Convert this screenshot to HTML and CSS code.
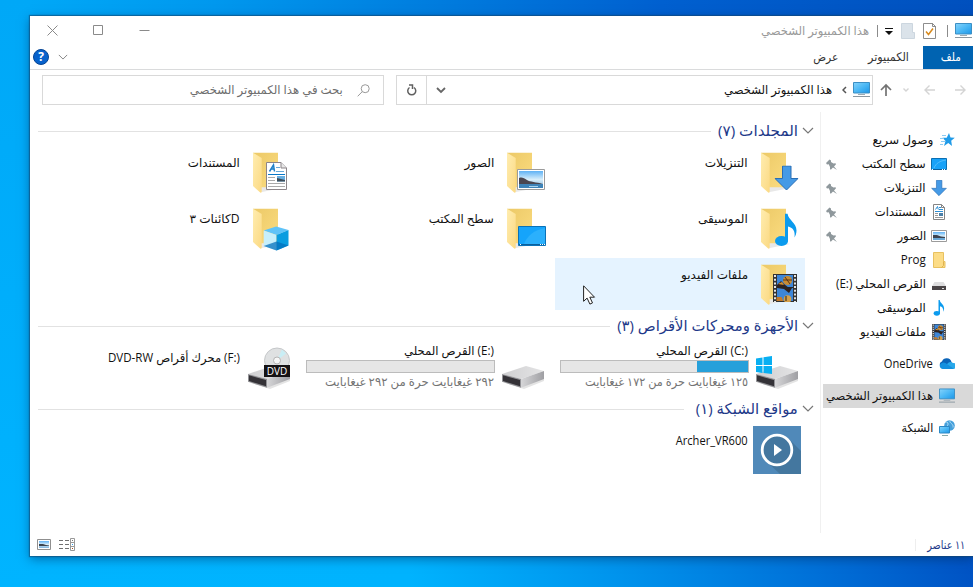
FILE: index.html
```
<!DOCTYPE html>
<html lang="ar" dir="rtl">
<head>
<meta charset="utf-8">
<title>هذا الكمبيوتر الشخصي</title>
<link rel="stylesheet" href="styles.css">
</head>
<body>
<svg class="defs" aria-hidden="true">
  <defs>
    <linearGradient id="gBack" x1="0" y1="0" x2="1" y2="1"><stop offset="0" stop-color="#ecc967"/><stop offset="1" stop-color="#fbdc80"/></linearGradient>
    <linearGradient id="gFlap" x1="0" y1="0" x2="1" y2="1"><stop offset="0" stop-color="#ffedb0"/><stop offset="1" stop-color="#fbd983"/></linearGradient>
    <linearGradient id="gScreen" x1="0" y1="0" x2="1" y2="1"><stop offset="0" stop-color="#86d3fb"/><stop offset=".5" stop-color="#4bb8f5"/><stop offset="1" stop-color="#1c96e8"/></linearGradient>
    <linearGradient id="gTop" x1="0" y1="0" x2="1" y2="0"><stop offset="0" stop-color="#cfcfd1"/><stop offset="1" stop-color="#e4e4e5"/></linearGradient>
    <linearGradient id="gSide" x1="0" y1="0" x2="1" y2="0"><stop offset="0" stop-color="#d6d6d8"/><stop offset="1" stop-color="#9f9fa3"/></linearGradient>
    <linearGradient id="gSky" x1="0" y1="0" x2="0" y2="1"><stop offset="0" stop-color="#5fb2f5"/><stop offset=".5" stop-color="#d8eefa"/><stop offset="1" stop-color="#7fb4dd"/></linearGradient>
  </defs>
  <symbol id="folder" viewBox="0 0 48 48">
    <path d="M10 39h23l4 1-20 4z" fill="#e8e8e8"/>
    <path d="M8 4.7h25v34.5H14z" fill="url(#gBack)"/>
    <path d="M8 4.7l8.7 5.3v34.2l-1.2.6L8 38z" fill="url(#gFlap)"/>
  </symbol>
  <symbol id="photo" viewBox="0 0 28 21">
    <path d="M.5.5h27v20H.5z" fill="#fff" stroke="#9b9b9b"/>
    <path d="M2 2h24v17H2z" fill="url(#gSky)"/>
    <path d="M2 9c3-1 5 0 8 2s9 2 16 4H2z" fill="#4a4650"/>
    <path d="M2 15h24v4H2z" fill="#3e83b8"/><path d="M12 17h9v1h-9z" fill="#a9d3ee"/>
  </symbol>
  <symbol id="photo-small" viewBox="0 0 16 12">
    <path d="M.5.5h15v11H.5z" fill="#fff" stroke="#9b9b9b"/>
    <path d="M2 2h12v8H2z" fill="url(#gSky)"/>
    <path d="M2 5h4l4 1.500 4 .5v1H2z" fill="#3c4450"/><path d="M2 8h12v2H2z" fill="#6aa7d4"/>
  </symbol>
  <symbol id="film" viewBox="0 0 24 28">
    <path d="M0 0h24v28H0z" fill="#333"/>
    <path d="M4 1h16v12H4zM4 14h16v13H4z" fill="#3d86d8"/>
    <path d="M2 1v27M22 1v27" stroke="#e4e4e4" stroke-width="2" stroke-dasharray="2 1.7"/>
    <circle cx="14.5" cy="6.500" r="4.500" fill="#c88c34"/><path d="M10 6h9M12 3l5 7" stroke="#5b3214"/>
    <path d="M4 11l4-4 3 3 5 4h3l-3 5-5-4-7-1z" fill="#30221f"/><path d="M5 10l4-2 2 3z" fill="#d4912f"/>
    <circle cx="14.500" cy="25" r="3.800" fill="#d6a04a"/><path d="M3.500 23h5l2 4h-7z" fill="#c27a2c"/><path d="M4 13.500h16M13 22v5" stroke="#252525"/>
  </symbol>
  <symbol id="doc" viewBox="0 0 21 28">
    <path d="M.5.5H15L20.500 6v21.500H.5z" fill="#fff" stroke="#8c8589"/><path d="M15 .5V6h5.500" fill="#e8e8e8" stroke="#8c8589"/>
    <path d="M3.500 9.500L7.500 3l1 6.500M5 7h3" fill="none" stroke="#1f80c8" stroke-width="1.500"/>
    <path d="M10 5.500h4M10 9.500h8" stroke="#67a9d8"/><path d="M2 12.500h17" stroke="#0878c8"/>
    <path d="M2 15.500h7M2 18.500h7M2 21.500h17M2 24.500h17" stroke="#aaa"/><path d="M11 14h8v5.500h-8z" fill="#67aee0"/><path d="M11 16l8 2v1.500h-8z" fill="#3d4c58"/>
  </symbol>
  <symbol id="desk" viewBox="0 0 28 20">
    <path d="M.5.5h27v19H.5z" fill="#15a4fb" stroke="#0a72b8"/><path d="M6 18C9 10 16 4 27 2v16z" fill="#2bb0fc"/><path d="M1 18.500h26" stroke="#0b5f9c"/><path d="M2 18.500h1M22 18.500h1M24 18.500h1M26 18.500h1" stroke="#fff"/>
  </symbol>
  <symbol id="down" viewBox="0 0 24 25"><path d="M8 .5h8.500v12.500h7L12 24.500.5 13H8z" fill="#459ae6" stroke="#2a6fb5"/></symbol>
  <symbol id="note" viewBox="0 0 22 33"><ellipse cx="6.500" cy="27.500" rx="6.500" ry="5" fill="#0b9bee"/><path d="M10 0h2.500c1 7 9 9 9 17 0 3-1 5-2 7 1-7-2-10-6.500-11v15H10z" fill="#0b9bee"/></symbol>
  <symbol id="drive" viewBox="0 0 48 48">
    <path d="M6 40l19 6 20-8v-3z" fill="#e4e4e4"/>
    <path d="M3 31l24-8 18 5-23 8z" fill="url(#gTop)"/><path d="M22 36l23-8v8l-23 8.800z" fill="url(#gSide)"/>
    <path d="M3 31l19 5v8.800L3 38.800z" fill="#929296"/><path d="M4 32.300l17 4.700v6.300L4 38z" fill="#343237"/>
  </symbol>
  <symbol id="pc" viewBox="0 0 17 16">
    <path d="M.5.500h16v10.500H.5z" fill="url(#gScreen)" stroke="#3c8fc4"/><path d="M5 12.500h7" stroke="#9eaab2"/><path d="M0 14.500h17" stroke="#8b98a1"/>
  </symbol>
  <symbol id="pin" viewBox="0 0 11 11"><path d="M0 4L3.500.5 5 1.500v1.500l2.500 1.500 2-.2.500 1-2 2.200 3 3.500-4-2.500L4.800 10.800 4 10V8L2.700 5.300 1 5.500z" fill="#8f989c"/></symbol>
  <symbol id="chev" viewBox="0 0 12 7"><path d="M1 1l5 5 5-5" fill="none" stroke="currentColor" stroke-width="1.200"/></symbol>
</svg>

<main class="window">
  <header class="titlebar">
    <div class="quick">
      <svg class="pc-icon"><use href="#pc"/></svg>
      <i class="sep"></i>
      <svg class="props" viewBox="0 0 13 16"><path d="M.5.5h9l3 3v12H.5z" fill="#fff" stroke="#8d8d8d"/><path d="M9.500 0v3.500H13" fill="none" stroke="#8d8d8d"/><path d="M3 8.500l2.500 3 4.500-6" fill="none" stroke="#d88a1d" stroke-width="1.500"/></svg>
      <svg class="newf" viewBox="0 0 14 16"><path d="M.5.5h11v9h2v6H.5z" fill="#dbe3ea" stroke="#ccd6df"/></svg>
      <svg class="more" viewBox="0 0 8 7"><path d="M0 .5h8" stroke="#111"/><path d="M0 3h8L4 7z" fill="#111"/></svg>
      <i class="sep"></i>
      <span class="fit title" data-w="108">هذا الكمبيوتر الشخصي</span>
    </div>
    <div class="controls">
      <svg viewBox="0 0 11 11"><path d="M.5 5.500h10" stroke="#8a8a8a"/></svg>
      <svg viewBox="0 0 11 11"><path d="M.5.500h9v9h-9z" fill="none" stroke="#8a8a8a"/></svg>
      <svg viewBox="0 0 11 11"><path d="M.5.500l10 10M10.500.500l-10 10" stroke="#8a8a8a"/></svg>
    </div>
  </header>
  <nav class="tabs">
    <span class="tab file"><span class="fit" data-w="20">ملف</span></span>
    <span class="tab comp"><span class="fit" data-w="41">الكمبيوتر</span></span>
    <span class="tab view"><span class="fit" data-w="25">عرض</span></span>
    <div class="help">
      <svg class="small-chev"><use href="#chev"/></svg>
      <b class="q">?</b>
    </div>
  </nav>
  <div class="bar">
    <div class="navs">
      <svg class="n16 pale" viewBox="0 0 16 16"><path d="M3 8h10M8.500 3.500L13 8l-4.500 4.500"/></svg>
      <svg class="n16 pale back" viewBox="0 0 16 16"><path d="M13 8H3M7.500 3.500L3 8l4.500 4.500"/></svg>
      <svg class="n8 pale" viewBox="0 0 8 8"><path d="M1.500 2.500L4 5l2.500-2.500"/></svg>
      <svg class="n16 up" viewBox="0 0 16 16"><path d="M8 14V3M3 8l5-5 5 5"/></svg>
    </div>
    <div class="address">
      <svg class="pc-icon"><use href="#pc"/></svg>
      <svg class="crumb" viewBox="0 0 5 8"><path d="M4 1L1 4l3 3" fill="none" stroke="#555" stroke-width="1.500"/></svg>
      <span class="fit" data-w="108">هذا الكمبيوتر الشخصي</span>
      <svg class="drop" viewBox="0 0 10 7"><path d="M1 1l4 4 4-4" fill="none" stroke="#666" stroke-width="1.800"/></svg>
      <span class="refresh"><svg viewBox="0 0 12 12"><path d="M3.500 3.500a4 4 0 1 0 4.500 0M3 1h3.500v4" fill="none" stroke="#606060" stroke-width="1.500"/></svg></span>
    </div>
    <div class="search">
      <svg viewBox="0 0 13 13"><circle cx="8.200" cy="4.700" r="4" fill="none" stroke="#999"/><path d="M5.300 7.600L.7 12.300" stroke="#999"/></svg>
      <span class="fit" data-w="153">بحث في هذا الكمبيوتر الشخصي</span>
    </div>
  </div>

  <div class="body">
    <aside class="side">
      <div class="row top"><svg class="i16" viewBox="0 0 16 16"><path d="M10 1l1.500 4.500 4.300.3-3.600 3L13 14 9.300 11 5 14 6.500 9 3.500 5.800h4.200z" fill="#209be8"/><path d="M3 3.500h4M1 6.500h4M2 9.500h4M1 12.500h3" stroke="#8dcbf2"/></svg><span class="fit" data-w="61">وصول سريع</span></div>
      <div class="row"><svg class="i16" viewBox="0 0 16 16"><path d="M.5 2.500h15v11H.5z" fill="#18a2f8" stroke="#0a6fb3"/><path d="M3 12C5 7 9 5 15 4" fill="none" stroke="#54bdfb"/><path d="M1 13.500h14" stroke="#0b5f9c"/><path d="M1 13.500h1M11 13.500h1M13 13.500h1" stroke="#fff"/></svg><span class="fit" data-w="64">سطح المكتب</span><svg class="pin"><use href="#pin"/></svg></div>
      <div class="row"><svg class="i16"><use href="#down"/></svg><span class="fit" data-w="42">التنزيلات</span><svg class="pin"><use href="#pin"/></svg></div>
      <div class="row"><svg class="i16" viewBox="0 0 16 16"><path d="M2.500.5h8l3 3v12h-11z" fill="#fff" stroke="#858585"/><path d="M10.500.5v3h3" fill="none" stroke="#858585"/><path d="M4.500 5.500l2-3 .8 3M8 3.500h2M8 5.500h4M4 7.500h8" fill="none" stroke="#2c8fd6"/><path d="M4 9.500h3M4 11.500h3M4 13.500h8" stroke="#999"/><path d="M8 9h4v3H8z" fill="#4a7fa8"/></svg><span class="fit" data-w="51">المستندات</span><svg class="pin"><use href="#pin"/></svg></div>
      <div class="row"><svg class="i16"><use href="#photo-small"/></svg><span class="fit" data-w="29">الصور</span><svg class="pin"><use href="#pin"/></svg></div>
      <div class="row"><svg class="i16" viewBox="0 0 16 16"><path d="M2.500.5h10v9h1.500v6H2.500z" fill="#fcdc86" stroke="#e8c160"/><path d="M12.500 9.500v4l-2 2" fill="none" stroke="#dfb350"/></svg><span class="fit" data-w="25">Prog</span></div>
      <div class="row"><svg class="i16" viewBox="0 0 16 16"><path d="M3.500 6h9l2.500 4H1z" fill="#dededf"/><path d="M1 10h14v4H1z" fill="#4a4547"/><path d="M11 12.500h2" stroke="#ddd"/></svg><span class="fit" data-w="90">القرص المحلي <bdi dir="ltr">(E:)</bdi></span></div>
      <div class="row"><svg class="i16"><use href="#note"/></svg><span class="fit" data-w="49">الموسيقى</span></div>
      <div class="row"><svg class="i16"><use href="#film"/></svg><span class="fit" data-w="66">ملفات الفيديو</span></div>
      <div class="row top gap"><svg class="i16" viewBox="0 0 16 16"><path d="M1 9.500a3 3 0 0 1 2-4 5 5 0 0 1 9.500.5L14 10H2z" fill="#0b64b8"/><path d="M9 7a4 4 0 0 1 5 0 3 3 0 0 1 .5 6H4z" fill="#28a8ea"/><path d="M1.500 8a4 4 0 0 1 5-1l8 5.500-1 .5H4A3 3 0 0 1 1.500 8z" fill="#1490df"/></svg><span class="fit" data-w="49">OneDrive</span></div>
      <div class="row top gap selected"><svg class="i16"><use href="#pc"/></svg><span class="fit" data-w="107">هذا الكمبيوتر الشخصي</span></div>
      <div class="row top gap"><svg class="i16" viewBox="0 0 16 16"><circle cx="10.500" cy="5.500" r="5.300" fill="#459fda"/><path d="M6 3c3-3 4 2 2 3M11 .5c-1 3 4 3 3 7" stroke="#b1def7" fill="none"/><path d="M.5 6.500h10v6.500H.5z" fill="url(#gScreen)" stroke="#2c88c5"/><path d="M3 15.500h6" stroke="#8aa"/></svg><span class="fit" data-w="32">الشبكة</span></div>
    </aside>

    <section class="content">
      <h2 class="group"><svg><use href="#chev"/></svg><span class="fit" data-w="80">المجلدات (٧)</span></h2>
      <div class="tiles">
        <div class="tile"><svg class="i48" viewBox="0 0 48 48"><use href="#folder"/><use href="#down" x="21.500" y="17.500" width="24" height="25"/></svg><span class="fit" data-w="43">التنزيلات</span></div>
        <div class="tile"><svg class="i48" viewBox="0 0 48 48"><use href="#folder"/><use href="#photo" x="18" y="21" width="28" height="21"/></svg><span class="fit" data-w="30">الصور</span></div>
        <div class="tile"><svg class="i48" viewBox="0 0 48 48"><use href="#folder"/><use href="#doc" x="21" y="14" width="21" height="28"/></svg><span class="fit" data-w="52">المستندات</span></div>
        <div class="tile"><svg class="i48" viewBox="0 0 48 48"><use href="#folder"/><use href="#note" x="22" y="9.500" width="22" height="33"/></svg><span class="fit" data-w="50">الموسيقى</span></div>
        <div class="tile"><svg class="i48" viewBox="0 0 48 48"><use href="#folder"/><use href="#desk" x="19" y="22" width="28" height="20"/></svg><span class="fit" data-w="65">سطح المكتب</span></div>
        <div class="tile"><svg class="i48" viewBox="0 0 48 48"><use href="#folder"/><path d="M18.700 26.500l12.500-4 12.300 3.500-12 5z" fill="#5fc3f8"/><path d="M18.700 26.500L31.500 31v15.500l-12.800-4.500z" fill="#c7effb"/><path d="M31.500 31l12-5v15.500l-12 5z" fill="#0a9de0"/><path d="M18.700 42L31.500 37.500l12 4-12 5z" fill="#0470bc" opacity=".75"/></svg><span class="fit" data-w="50">Dكائنات ٣</span></div>
        <div class="tile hover"><svg class="i48" viewBox="0 0 48 48"><use href="#folder"/><use href="#film" x="20" y="14" width="24" height="28"/></svg><span class="fit" data-w="67">ملفات الفيديو</span></div>
      </div>

      <h2 class="group"><svg><use href="#chev"/></svg><span class="fit" data-w="181">الأجهزة ومحركات الأقراص (٣)</span></h2>
      <div class="tiles">
        <div class="tile disk"><svg class="i48" viewBox="0 0 48 48"><use href="#drive"/><path d="M3 15.500l6.500-1v7.500H3zM10.500 14.300l8.500-1.300v9h-8.500zM3 23h6.500v7L3 29zM10.500 23H19v8l-8.500-1z" fill="#08aff2"/></svg>
          <div class="info"><span class="fit" data-w="92"><bdi dir="ltr">(C:)</bdi> القرص المحلي</span><div class="meter"><i style="width:27.500%"></i></div><span class="fit muted" data-w="163">١٢٥ غيغابايت حرة من ١٧٢ غيغابايت</span></div></div>
        <div class="tile disk"><svg class="i48" viewBox="0 0 48 48"><use href="#drive"/></svg>
          <div class="info"><span class="fit" data-w="90"><bdi dir="ltr">(E:)</bdi> القرص المحلي</span><div class="meter"></div><span class="fit muted" data-w="169">٢٩٢ غيغابايت حرة من ٢٩٢ غيغابايت</span></div></div>
        <div class="tile"><svg class="i48" viewBox="0 0 48 48"><use href="#drive"/><circle cx="32" cy="17.500" r="12.500" fill="#dfe1e2" stroke="#c5c7c9"/><path d="M32 17.500l5-11 4 4z" fill="#c9eef5"/><circle cx="32" cy="17.500" r="3.500" fill="#f7f7f7" stroke="#b5b5b5"/><path d="M19 22h26v12H19z" fill="#151214"/><text x="32" y="32" class="dvd">DVD</text></svg><span class="fit" data-w="132"><bdi dir="ltr">(F:)</bdi> محرك أقراص <bdi dir="ltr">DVD-RW</bdi></span></div>
      </div>

      <h2 class="group short"><svg><use href="#chev"/></svg><span class="fit" data-w="102">مواقع الشبكة (١)</span></h2>
      <div class="tiles">
        <div class="tile"><svg class="i48" viewBox="0 0 48 48"><path d="M0 0h48v48H0z" fill="#5089b9"/><path d="M35 12l13 13v23H27L13 35z" fill="#44779f"/><circle cx="24" cy="24" r="14.800" fill="#44779f" stroke="#fff" stroke-width="2.800"/><path d="M21 18v12l8-6z" fill="#fff"/></svg><span class="fit" data-w="72">Archer_VR600</span></div>
      </div>
    </section>
  </div>

  <footer class="status">
    <div class="count"><span class="fit" data-w="38">١١ عناصر</span></div>
    <div class="views">
      <svg class="v1" viewBox="0 0 17 13"><path d="M1 2.500h4M7 2.500h4M1 6.500h4M7 6.500h4M1 10.500h4M7 10.500h4" stroke="#707070"/><path d="M12.500.5h4v12h-4zM12.500 4.500h4M12.500 8.500h4" fill="#fff" stroke="#999"/><path d="M14 2.500h1" stroke="#777"/><path d="M14 6.500h1" stroke="#2a9be8"/><path d="M14 10.500h1" stroke="#a4501c"/></svg>
      <svg class="v2" viewBox="0 0 14 11"><path d="M.5.5h13v10H.5z" fill="#fff" stroke="#8f8f8f"/><path d="M2 2h10v7H2z" fill="url(#gSky)"/><path d="M2 5h4l3 1 3 .5v.5H2z" fill="#3c4450"/></svg>
    </div>
  </footer>
</main>
<svg class="cursor" viewBox="0 0 13 20"><path d="M.6.800v15.500l3.500-3.200 2.800 6 2.600-1.200-2.700-5.700h4.700z" fill="#fff" stroke="#222"/></svg>
<script src="fit.js"></script>
</body>
</html>
```
FILE: styles.css
```
* { box-sizing: border-box; }
body {
  margin: 0;
  width: 973px;
  height: 587px;
  overflow: hidden;
  padding: 16px 0 0 0;
  direction: rtl;
  font: 12px/16px "Open Sans", "DejaVu Sans", sans-serif;
  color: #111;
  background:
    linear-gradient(180deg, #00a8f7, #00b4ff) left / 30px 100% no-repeat,
    linear-gradient(90deg, #00b4ff 0%, #00b3fe 42%, #0096ee 62%, #0070d8 84%, #0053c4 100%) bottom / 100% 100px no-repeat,
    linear-gradient(90deg, #00a8f7 3%, #0098ee 22%, #0080e0 42%, #0060d0 68%, #0050be 100%);
}
svg { display: block; flex: none; }
.defs { position: absolute; width: 0; height: 0; }
.fit { display: inline-block; flex: none; white-space: nowrap; transform-origin: 100% 50%; }

.window {
  width: 943px;
  height: 540px;
  margin-right: 0;
  background: #fff;
  display: flex;
  flex-direction: column;
  box-shadow: 0 0 1px 1px rgba(20, 70, 110, .55), 0 3px 10px rgba(0, 40, 90, .5);
}
.titlebar { height: 30px; display: flex; justify-content: space-between; align-items: center; }
.quick { display: flex; align-items: center; padding-right: 1px; }
.pc-icon { width: 17px; height: 16px; }
.sep { width: 1px; height: 12px; background: #8b8b8b; }
.quick .sep { margin-right: 7px; }
.props { width: 13px; height: 16px; margin-right: 11px; }
.newf { width: 14px; height: 16px; margin-right: 8px; }
.more { width: 8px; height: 7px; margin-right: 8px; }
.quick .more + .sep { margin-right: 7px; }
.title { margin-right: 8px; color: #999; }
.controls { display: flex; gap: 35px; padding-left: 17px; margin-top: -1px; }
.controls svg { width: 11px; height: 11px; }

.tabs { height: 24px; display: flex; align-items: stretch; border-bottom: 1px solid #dadbdc; color: #333; }
.tab { display: flex; align-items: center; padding-bottom: 2px; }
.file { width: 50px; padding-right: 12px; background: #0063b1; color: #fff; }
.comp { margin-right: 14px; }
.view { margin-right: 30px; }
.help { margin-right: auto; display: flex; align-items: center; gap: 9px; padding-left: 3px; padding-bottom: 1px; }
.small-chev { width: 10px; height: 6px; color: #888; }
.q { width: 16px; height: 16px; border-radius: 50%; background: #0762cc; border: 1px solid #064594; color: #fff; font-size: 12px; line-height: 14px; text-align: center; }

.bar { height: 42px; padding-top: 5px; display: flex; align-items: flex-start; }
.navs { width: 100px; height: 30px; display: flex; align-items: center; padding-right: 5px; }
.navs svg { fill: none; stroke: #737373; stroke-width: 1.7; }
.navs .pale { stroke: #d4d4d4; stroke-width: 1.4; }
.n16 { width: 16px; height: 16px; }
.n8 { width: 8px; height: 8px; margin-right: 12px; }
.back { margin-right: 14px; }
.up { margin-right: 8px; }
.address { width: 477px; height: 30px; border: 1px solid #d9d9d9; display: flex; align-items: center; padding-right: 2px; }
.crumb { width: 5px; height: 8px; margin: 0 6px 0 10px; }
.drop { width: 10px; height: 7px; margin-right: auto; margin-left: 9px; }
.refresh { width: 30px; align-self: stretch; border-right: 1px solid #d9d9d9; display: flex; align-items: center; justify-content: center; }
.refresh svg { width: 12px; height: 12px; }
.search { width: 342px; height: 30px; margin-right: 12px; border: 1px solid #d9d9d9; display: flex; align-items: center; padding-right: 13px; gap: 14px; color: #6d6d6d; }
.search svg { width: 13px; height: 13px; }

.body { height: 421px; display: flex; }
.side { width: 153px; padding-top: 16px; border-left: 1px solid #f0f0f0; }
.row { height: 24px; display: flex; align-items: center; gap: 5px; padding-right: 26px; padding-left: 5px; }
.row.top { padding-right: 18px; gap: 6px; }
.row.gap { margin-top: 8px; }
.selected { background: #d9d9d9; margin-left: 2px; }
.i16 { width: 16px; height: 16px; }
.pin { width: 11px; height: 11px; margin-right: auto; }

.content { flex: 1; padding: 7px 6px 0 8px; }
.group { height: 24px; margin: 0 0 3px; display: flex; align-items: center; font-size: 15px; line-height: 22px; font-weight: 400; color: #1e3989; }
.group > svg { width: 12px; height: 7px; margin-left: 4px; margin-bottom: 1px; color: #777; }
.group .fit { margin-top: -2px; }
.group::after { content: ""; flex: 1; height: 1px; margin-right: 7px; background: #e2e2e2; }
.group.short::after { margin-right: 12px; }
.tiles { display: grid; grid-template-columns: repeat(3, 250px); gap: 4px; padding-right: 9px; margin-bottom: 4px; }
.tile { height: 52px; display: flex; gap: 5px; padding: 2px 4px; }
.tile > .fit { align-self: flex-start; margin-top: 7px; }
.hover { background: #e5f3ff; }
.i48 { width: 48px; height: 48px; }
.info { width: 189px; display: flex; flex-direction: column; align-items: flex-start; margin-right: -1px; }
.info .fit { height: 16px; margin-right: 1px; }
.meter { width: 189px; height: 13px; border: 1px solid #bcbcbc; background: #e6e6e6; margin: 1px 0; }
.meter i { display: block; height: 11px; background: #26a0da; }
.muted { color: #747474; }
.dvd { font: 10px "Open Sans", sans-serif; fill: #fff; text-anchor: middle; direction: ltr; }

.status { height: 23px; display: flex; justify-content: space-between; align-items: center; padding: 0 8px 0 7px; color: #1e3989; }
.count { padding-left: 11px; border-left: 1px solid #eee; height: 12px; display: flex; align-items: center; }
.views { display: flex; align-items: center; gap: 7px; }
.v1 { width: 17px; height: 13px; }
.v2 { width: 14px; height: 11px; }
.cursor { position: absolute; left: 583px; top: 285px; width: 13px; height: 20px; }
```
FILE: fit.js
```
// Condense each label horizontally to the column width it is given.
document.querySelectorAll('.fit').forEach(function (el) {
  var target = Number(el.dataset.w);
  var natural = el.getBoundingClientRect().width;
  el.style.transform = 'scaleX(' + target / natural + ')';
  el.style.marginLeft = (target - natural) + 'px';
});
```
